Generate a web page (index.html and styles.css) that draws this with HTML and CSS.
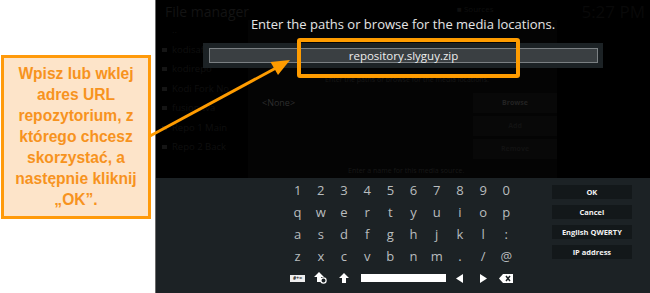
FILE: index.html
```html
<!DOCTYPE html>
<html lang="pl">
<head>
    <meta charset="UTF-8">
    <meta name="viewport" content="width=device-width, initial-scale=1.0">
    <title>Kodi - dodawanie repozytorium</title>
    <link rel="stylesheet" href="styles.css">
</head>
<body>

    <div class="page">
        <aside class="side">
            <div class="callout">
                Wpisz lub wklej<br>adres URL<br>repozytorium, z<br>którego chcesz<br>skorzystać, a<br>następnie kliknij<br>„OK”.
            </div>
        </aside>

        <main class="screen">
            <section class="backdrop">
                <header class="topbar">
                    <span class="title">File manager</span>
                    <span class="crumb">■ Sources</span>
                    <span class="clock">5:27 PM</span>
                </header>

                <div class="bg-body">
                    <ul class="files">
                        <li class="up">..</li>
                        <li>kodisafe</li>
                        <li>kodirepo</li>
                        <li>Kodi Fork No</li>
                        <li>fusion.tva</li>
                        <li>Repo 1 Main</li>
                        <li>Repo 2 Back</li>
                    </ul>

                    <div class="dialog">
                        <p class="hint">Enter the paths or browse for the media locations.</p>
                        <div class="dlg-row">
                            <span class="none">&lt;None&gt;</span>
                            <div class="dlg-buttons">
                                <span class="lit">Browse</span>
                                <span>Add</span>
                                <span>Remove</span>
                            </div>
                        </div>
                        <p class="hint name-hint">Enter a name for this media source.</p>
                    </div>
                </div>

                <!-- keyboard dialog heading lies over the dimmed file manager -->
                <div class="kb-head">
                    <h1>Enter the paths or browse for the media locations.</h1>
                    <div class="editbar">
                        <div class="edit">repository.slyguy.zip</div>
                    </div>
                </div>
                <div class="highlight"></div>
            </section>

            <section class="keyboard">
                <div class="keys">
                    <span>1</span><span>2</span><span>3</span><span>4</span><span>5</span>
                    <span>6</span><span>7</span><span>8</span><span>9</span><span>0</span>

                    <span>q</span><span>w</span><span>e</span><span>r</span><span>t</span>
                    <span>y</span><span>u</span><span>i</span><span>o</span><span>p</span>

                    <span>a</span><span>s</span><span>d</span><span>f</span><span>g</span>
                    <span>h</span><span>j</span><span>k</span><span>l</span><span>:</span>

                    <span>z</span><span>x</span><span>c</span><span>v</span><span>b</span>
                    <span>n</span><span>m</span><span>.</span><span>/</span><span>@</span>

                    <span><b class="symbols">#+=</b></span>
                    <span>
                        <svg width="13" height="12" viewBox="0 0 13 12">
                            <path d="M5 0 L10 5 H7 V10 H3 V5 H0 Z" fill="#fff"/>
                            <circle cx="9.5" cy="8.5" r="2.6" fill="#1c2225" stroke="#fff" stroke-width="1.2"/>
                        </svg>
                    </span>
                    <span>
                        <svg width="10" height="10" viewBox="0 0 10 10">
                            <path d="M5 0 L10 5 H7 V10 H3 V5 H0 Z" fill="#fff"/>
                        </svg>
                    </span>
                    <span class="space"><i></i></span>
                    <span>
                        <svg width="7" height="9" viewBox="0 0 7 9"><path d="M7 0 V9 L0 4.5 Z" fill="#fff"/></svg>
                    </span>
                    <span>
                        <svg width="7" height="9" viewBox="0 0 7 9"><path d="M0 0 V9 L7 4.5 Z" fill="#fff"/></svg>
                    </span>
                    <span>
                        <svg width="14" height="9" viewBox="0 0 14 9">
                            <path d="M4 0 H14 V9 H4 L0 4.5 Z" fill="#fff"/>
                            <path d="M7 2 L11 7 M11 2 L7 7" stroke="#1c2225" stroke-width="1.5"/>
                        </svg>
                    </span>
                </div>

                <div class="actions">
                    <button>OK</button>
                    <button>Cancel</button>
                    <button>English QWERTY</button>
                    <button>IP address</button>
                </div>
            </section>
        </main>

        <svg class="pointer" width="650" height="293" viewBox="0 0 650 293">
            <line x1="150" y1="136" x2="276" y2="68" stroke="#ff9c00" stroke-width="3"/>
            <polygon points="290,60 278,75 270.5,62" fill="#ff9c00"/>
        </svg>
    </div>

</body>
</html>
```

FILE: styles.css
```css
body {
    margin: 0;
    padding: 0;
    background: #fff;
    font-family: 'Open Sans', 'Noto Sans', sans-serif;
}

.page {
    position: relative;
    display: flex;
    width: 650px;
    height: 293px;
    overflow: hidden;
}

/* left side with the instruction box */
.side {
    width: 155px;
    flex-shrink: 0;
    padding-top: 55px;
}

.callout {
    margin-left: 1px;
    width: 144px;
    padding: 5px 0 6px;
    background: #fde4c9;
    border: 3px solid #ff9a0a;
    color: #f7931e;
    font-family: 'Liberation Sans', Arial, sans-serif;
    font-weight: bold;
    font-size: 15.6px;
    line-height: 21px;
    text-align: center;
}

/* kodi screen */
.screen {
    flex: 1;
    display: flex;
    flex-direction: column;
    background: #000;
    border-left: 1px solid #6a6a6a;
}

.backdrop {
    position: relative;
    height: 178px;
    overflow: hidden;
}

.topbar {
    height: 20px;
    display: flex;
    align-items: center;
    padding: 0 5px 0 9px;
}

.title {
    color: #131313;
    font-size: 14px;
    margin-top: 2px;
}

.crumb {
    margin-left: auto;
    color: #0f0f0f;
    font-size: 8px;
    margin-top: -4px;
}

.clock {
    margin-left: 88px;
    color: #090909;
    font-size: 17px;
    margin-top: 2px;
}

.bg-body {
    display: flex;
    height: 158px;
}

.files {
    list-style: none;
    margin: 0;
    padding: 0 0 0 6px;
    width: 86px;
    font-size: 9.5px;
    color: #0f0f0f;
    white-space: nowrap;
}

.files li {
    height: 19.5px;
    line-height: 19.5px;
}

.files li::before {
    content: "";
    display: inline-block;
    width: 5px;
    height: 4px;
    margin-right: 5px;
    background: #151515;
    vertical-align: middle;
}

.files li.up::before {
    background: transparent;
}

.dialog {
    width: 309px;
    background: #040404;
    padding-top: 55px;
}

.hint {
    margin: 0;
    padding-left: 77px;
    font-size: 7px;
    line-height: 10px;
    color: #181818;
}

.dlg-row {
    display: flex;
    justify-content: space-between;
    margin-top: 8px;
}

.none {
    padding: 5px 0 0 14px;
    font-size: 9px;
    line-height: 10px;
    color: #2e2e2e;
    height: 10px;
}

.dlg-buttons {
    display: flex;
    flex-direction: column;
    gap: 3px;
    width: 84px;
}

.dlg-buttons span {
    height: 20px;
    line-height: 20px;
    background: #080808;
    color: #121212;
    font-size: 7px;
    font-weight: bold;
    text-align: center;
}

.dlg-buttons .lit {
    color: #222;
}

.name-hint {
    margin-top: 7px;
    padding-left: 100px;
}

.kb-head {
    position: absolute;
    top: 0;
    left: 0;
    right: 0;
    display: flex;
    flex-direction: column;
    align-items: center;
}

.kb-head h1 {
    margin: 15px 0 0;
    height: 19px;
    font-size: 13px;
    font-weight: normal;
    line-height: 18px;
    color: #e6e6e6;
}

.editbar {
    margin-top: 9px;
    width: 389px;
    height: 15px;
    padding: 5px 5px 5px 6px;
    background: #1c2225;
}

.edit {
    height: 13px;
    border: 1px solid #7b8083;
    background: #3a3f42;
    color: #eee;
    font-size: 11.5px;
    line-height: 13px;
    text-align: center;
}

.highlight {
    position: absolute;
    left: 141px;
    top: 38px;
    width: 215px;
    height: 32px;
    border: 4px solid #ff9c00;
    border-radius: 3px;
}

/* on-screen keyboard */
.keyboard {
    flex: 1;
    display: flex;
    background: #1c2225;
}

.keys {
    margin: 1px 0 0 130px;
    display: grid;
    grid-template-columns: repeat(10, 23.2px);
    grid-auto-rows: 22px;
    color: #b9bdbf;
    font-size: 13px;
}

.keys span {
    display: flex;
    align-items: center;
    justify-content: center;
}

.symbols {
    display: block;
    width: 15px;
    height: 7px;
    background: #eee;
    color: #222;
    font-size: 5px;
    line-height: 7px;
    text-align: center;
}

.keys .space {
    grid-column: span 4;
    justify-content: flex-start;
    padding-left: 5px;
}

.space i {
    display: block;
    width: 85px;
    height: 8px;
    background: #fff;
}

.actions {
    margin: 7px 0 0 34px;
    display: flex;
    flex-direction: column;
    gap: 6px;
}

.actions button {
    width: 80px;
    height: 14px;
    padding: 0;
    border: 0;
    background: #13181a;
    color: #f2f2f2;
    font-family: 'Open Sans', sans-serif;
    font-size: 7.5px;
    font-weight: bold;
}

.pointer {
    position: absolute;
    top: 0;
    left: 0;
    pointer-events: none;
}
```
